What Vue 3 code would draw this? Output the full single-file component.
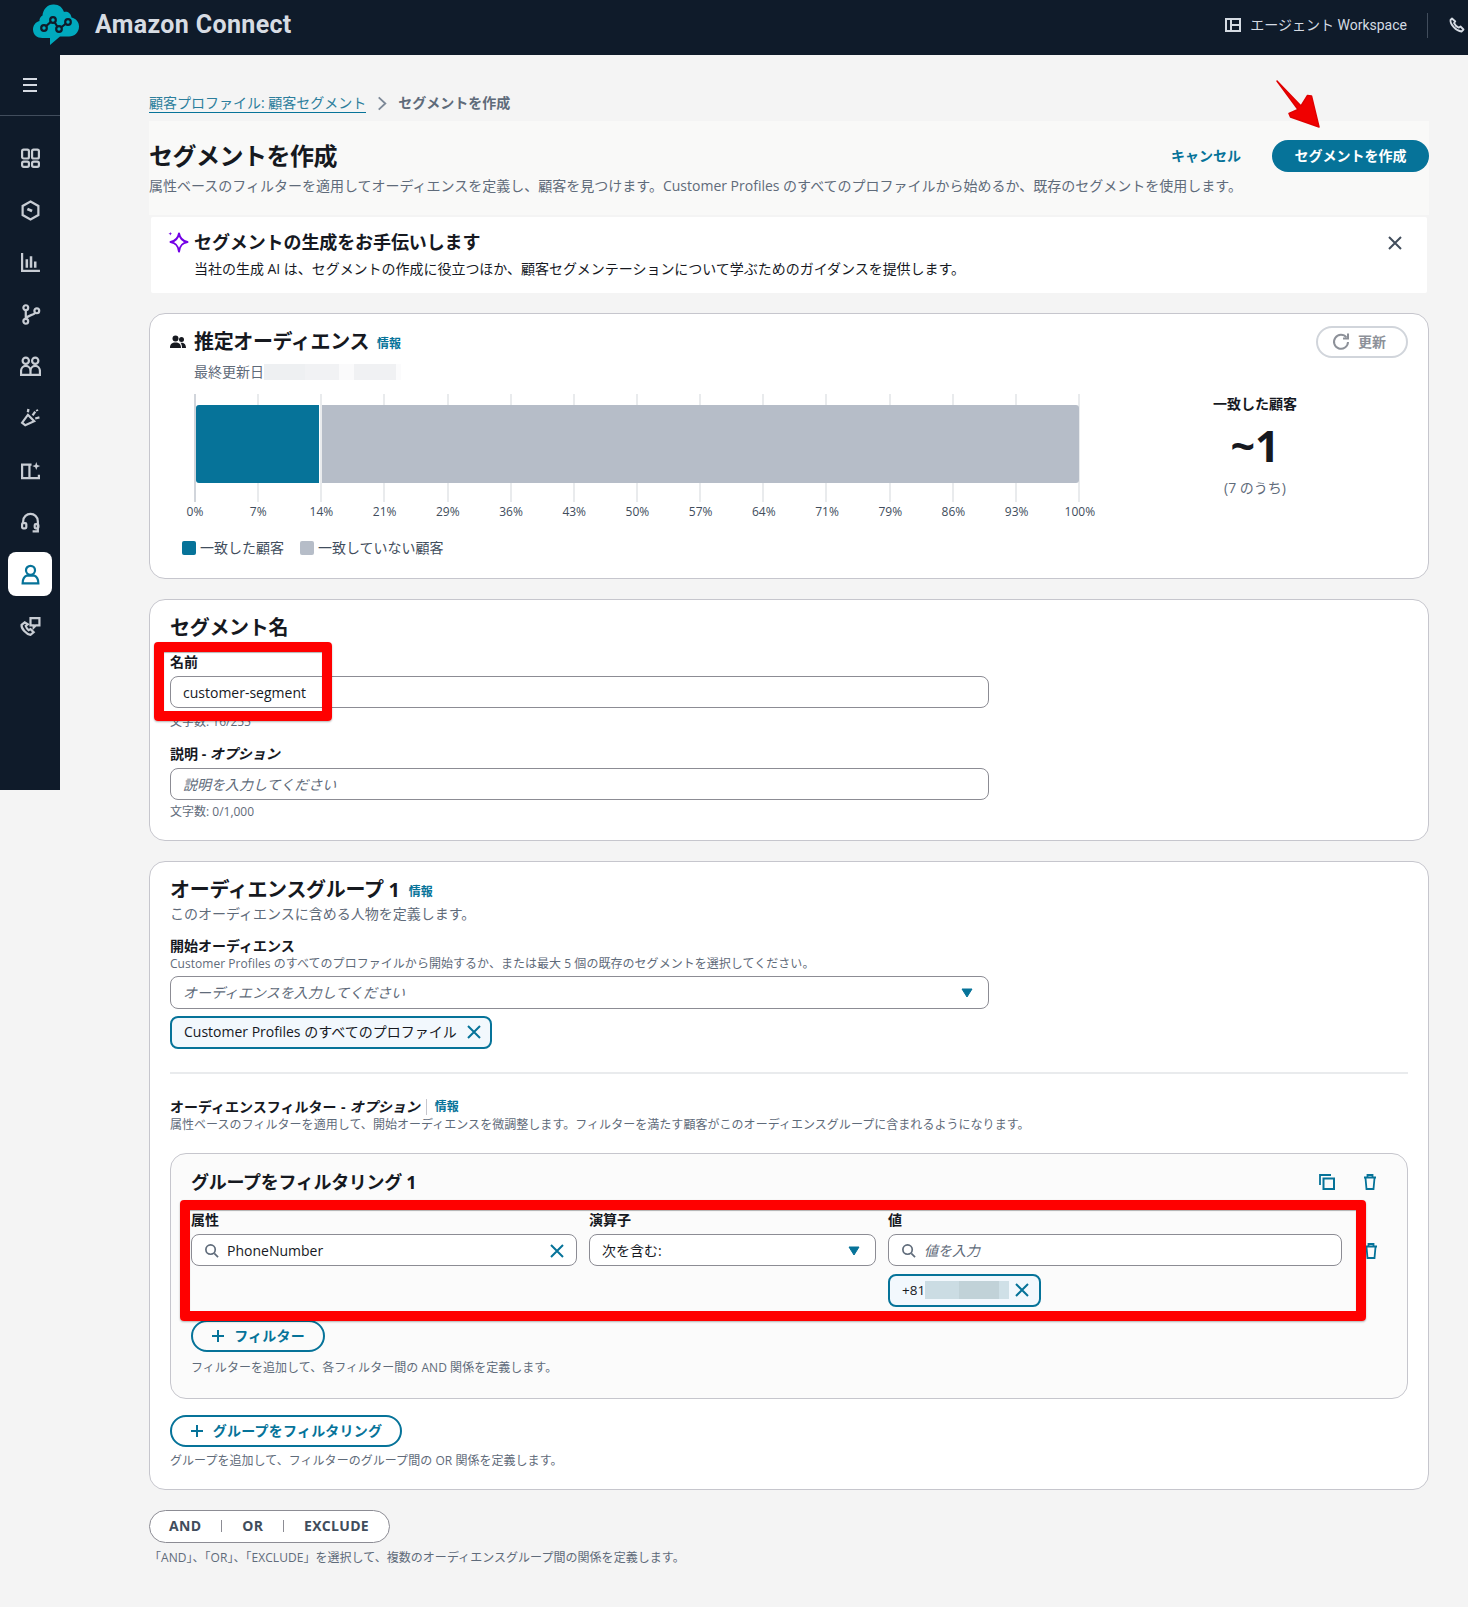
<script setup>
const ticks = ['0%','7%','14%','21%','29%','36%','43%','50%','57%','64%','71%','79%','86%','93%','100%']
</script>

<template>
  <div class="app">
    <header class="topbar">
      <div class="brand">
        <svg class="logo" viewBox="0 0 46 42" width="46" height="42">
          <path fill="#00a9bd" d="M17 41v-7H9.500C4 34 0 30.500 0 25.500 0 21.500 2.500 18 6.500 17 6 15.500 7.500 12.500 9.500 11.500 10 5 15 0 21 .5c5 0 8.500 3 10 7.500 3-1 7 1 7.500 5.500 4.500 1 7.500 4.500 7.500 9 0 6-4.500 10-10 10H27z"/>
          <path fill="none" stroke="#0f1b2a" stroke-width="2.200" d="M11 24l9-8 6 9 9-7"/>
          <circle cx="11" cy="24" r="2.800" fill="#00a9bd" stroke="#0f1b2a" stroke-width="2.200"/>
          <circle cx="20" cy="16" r="2.800" fill="#00a9bd" stroke="#0f1b2a" stroke-width="2.200"/>
          <circle cx="26" cy="25" r="2.800" fill="#00a9bd" stroke="#0f1b2a" stroke-width="2.200"/>
          <circle cx="35" cy="18" r="2.800" fill="#00a9bd" stroke="#0f1b2a" stroke-width="2.200"/>
        </svg>
        <span class="brand-name">Amazon Connect</span>
      </div>
      <div class="top-right">
        <svg viewBox="0 0 16 16" width="16" height="16" class="ico-top"><path d="M1 2h14v12H1zM6 2v12M6 8h9" fill="none" stroke="currentColor" stroke-width="2"/></svg>
        <span class="workspace">エージェント Workspace</span>
        <span class="top-sep"></span>
        <svg viewBox="0 0 16 16" width="16" height="16" class="ico-top phone"><path d="M3 1.500L1.500 3c-.5 4 5.500 11 11 11.500l2-2-3-3-1.800 1.200C7.500 10 6 8 5 6l1.300-1.500z" fill="none" stroke="currentColor" stroke-width="1.800" stroke-linejoin="round"/></svg>
      </div>
    </header>

    <div class="shell">
      <aside class="sidebar">
        <div class="burger"><span></span><span></span><span></span></div>
        <nav class="nav">
          <div class="nav-item"><svg viewBox="0 0 20 20"><rect x="2" y="1.500" width="6.500" height="8.500" rx="1.500"/><rect x="11.500" y="1.500" width="6.500" height="8.500" rx="1.500"/><rect x="2" y="13" width="6.500" height="5" rx="1.500"/><rect x="11.500" y="13" width="6.500" height="5" rx="1.500"/></svg></div>
          <div class="nav-item"><svg viewBox="0 0 20 20"><path d="M10 1.500l7.500 4.200v8.600L10 18.500l-7.500-4.200V5.700z"/><path d="M7 8.500l4.500 2" stroke-width="2.600"/></svg></div>
          <div class="nav-item"><svg viewBox="0 0 20 20"><path d="M2 1v17h17"/><path d="M6.500 7v8M10.500 4v11M14.500 9v6" stroke-width="2.400"/></svg></div>
          <div class="nav-item"><svg viewBox="0 0 20 20"><circle cx="5.500" cy="3.500" r="2.300"/><circle cx="5.500" cy="16.500" r="2.300"/><circle cx="16" cy="6.500" r="2.300"/><path d="M5.500 6v8M14.500 8.500C12 11 7.500 10.500 5.500 14"/></svg></div>
          <div class="nav-item"><svg viewBox="0 0 20 20"><circle cx="5.500" cy="4.500" r="3"/><circle cx="14.500" cy="4.500" r="3"/><path d="M1 18v-3.500C1 11.500 3 9.500 5.500 9.500S10 11.500 10 14.500V18zM10 18v-3.500c0-3 2-5 4.500-5s4.500 2 4.500 5V18z"/></svg></div>
          <div class="nav-item"><svg viewBox="0 0 20 20"><path d="M7.500 6.500l6 6L5 16.500l-3-2.500z"/><path d="M8 1l-.5 3M12 7l2.500-3.500M14.500 10l4-1M16 1.500l.5 1.500" stroke-width="2.200"/></svg></div>
          <div class="nav-item"><svg viewBox="0 0 20 20"><path d="M11 4.500H2v12.800h16V14M9 4.500v12.800"/><path d="M15.500 2l1 2.800 2.800 1-2.800 1-1 2.800-1-2.800-2.800-1 2.800-1z" fill="currentColor" stroke="none"/></svg></div>
          <div class="nav-item"><svg viewBox="0 0 20 20"><path d="M3 11V9c0-9.500 14-9.500 14 0v9.500h-5"/><rect x="2" y="10.500" width="4" height="5" rx="1"/><rect x="14" y="11.500" width="3.500" height="4" rx="1"/></svg></div>
          <div class="nav-item active"><svg viewBox="0 0 20 20"><circle cx="10" cy="6" r="4.300"/><path d="M2.500 18.500c0-3.500 1.500-6.500 4-7.500h7c2.500 1 4 4 4 7.500z"/></svg></div>
          <div class="nav-item"><svg viewBox="0 0 20 20"><path d="M4.500 6L1.500 8.500c-.5 3.500 4.500 9 8.500 9.500l3-2.500-3-3-1.800 1C7 12.500 6 11 5.500 9.500L7.500 8z"/><path d="M10 2h8.500v7H15l-2 2V9h-3z"/></svg></div>
        </nav>
      </aside>

      <main class="main">
        <div class="crumbs">
          <a class="crumb-link">顧客プロファイル: 顧客セグメント</a>
          <svg class="crumb-sep" viewBox="0 0 10 16" width="10" height="15"><path d="M1.500 1.500l7 6.500-7 6.500" fill="none" stroke="#7d8998" stroke-width="2"/></svg>
          <span class="crumb-cur">セグメントを作成</span>
        </div>

        <section class="page-head">
          <div class="head-row">
            <h1>セグメントを作成</h1>
            <div class="head-actions">
              <span class="cancel">キャンセル</span>
              <span class="primary">セグメントを作成</span>
            </div>
          </div>
          <p class="head-desc">属性ベースのフィルターを適用してオーディエンスを定義し、顧客を見つけます。Customer Profiles のすべてのプロファイルから始めるか、既存のセグメントを使用します。</p>
        </section>

        <section class="alert">
          <svg class="spark" viewBox="0 0 22 22" width="22" height="22"><path d="M12 2.500c.9 5 3 7.500 8.500 8.500-5.500 1-7.600 3.500-8.500 9.500-.9-6-3-8.500-8.500-9.500 5.500-1 7.600-3.500 8.500-8.500z" fill="none" stroke="#7300e5" stroke-width="2" stroke-linejoin="round"/><path d="M3.300 1l.5 1.300 1.300.5-1.300.5-.5 1.300-.5-1.300-1.300-.5 1.300-.5z" fill="#7300e5"/></svg>
          <div class="alert-body">
            <div class="alert-title">セグメントの生成をお手伝いします</div>
            <div class="alert-desc">当社の生成 AI は、セグメントの作成に役立つほか、顧客セグメンテーションについて学ぶためのガイダンスを提供します。</div>
          </div>
          <svg class="x-dark" viewBox="0 0 14 14" width="14" height="14"><path d="M1 1l12 12M13 1L1 13" stroke="#414d5c" stroke-width="2"/></svg>
        </section>

        <section class="card card-a">
          <div class="a-head">
            <div class="a-title">
              <svg viewBox="0 0 16 14" width="16" height="14"><circle cx="5.500" cy="3.500" r="3" fill="#16191f"/><circle cx="11.500" cy="4.500" r="2.500" fill="#16191f"/><path d="M0 13c0-4 2-5.500 5.500-5.500S11 9 11 13zM12 13c0-2-.5-4-1.500-5.200 3-.5 5.500 1 5.500 5.200z" fill="#16191f"/></svg>
              <h2>推定オーディエンス</h2>
              <span class="info">情報</span>
            </div>
            <span class="refresh">
              <svg viewBox="0 0 18 18" width="18" height="18"><path d="M14.500 4.500A7 7 0 1 0 16 9" fill="none" stroke="#8d9199" stroke-width="2"/><path d="M11 5.500h5v-5" fill="none" stroke="#8d9199" stroke-width="2"/></svg>
              更新
            </span>
          </div>
          <div class="updated">
            <span>最終更新日</span>
            <span class="blur-date"></span>
          </div>
          <div class="a-row">
            <div class="chart">
              <div class="plot">
                <div class="tick-row"><i v-for="t in ticks" :key="t"></i></div>
                <div class="bars"><span class="bar-on"></span><span class="bar-off"></span></div>
              </div>
              <div class="labels"><span v-for="t in ticks" :key="t"><b>{{ t }}</b></span></div>
              <div class="legend">
                <span class="sw on"></span><span>一致した顧客</span>
                <span class="sw off"></span><span>一致していない顧客</span>
              </div>
            </div>
            <div class="summary">
              <div class="s-label">一致した顧客</div>
              <div class="s-num">~1</div>
              <div class="s-of">(7 のうち)</div>
            </div>
          </div>
        </section>

        <section class="card card-b">
          <h2 class="sec-title">セグメント名</h2>
          <label class="lab first">名前</label>
          <div class="field"><span class="val">customer-segment</span></div>
          <div class="count">文字数: 16/255</div>
          <label class="lab second">説明 - <em>オプション</em></label>
          <div class="field"><span class="ph">説明を入力してください</span></div>
          <div class="count small-gap">文字数: 0/1,000</div>
        </section>

        <section class="card card-c">
          <div class="c-title"><h2 class="sec-title">オーディエンスグループ 1</h2><span class="info">情報</span></div>
          <p class="c-desc">このオーディエンスに含める人物を定義します。</p>
          <label class="lab start">開始オーディエンス</label>
          <div class="hint">Customer Profiles のすべてのプロファイルから開始するか、または最大 5 個の既存のセグメントを選択してください。</div>
          <div class="field select top-select"><span class="ph">オーディエンスを入力してください</span><svg viewBox="0 0 12 10" width="12" height="10"><path d="M1 1h10L6 9z" fill="#067399" stroke="#067399"/></svg></div>
          <div class="token wide">
            <span>Customer Profiles のすべてのプロファイル</span>
            <svg viewBox="0 0 14 14" width="14" height="14"><path d="M1 1l12 12M13 1L1 13" stroke="#067399" stroke-width="2"/></svg>
          </div>
          <hr class="divider" />
          <div class="f-label"><span class="lab">オーディエンスフィルター - <em>オプション</em></span><span class="f-sep"></span><span class="info">情報</span></div>
          <div class="hint f-hint">属性ベースのフィルターを適用して、開始オーディエンスを微調整します。フィルターを満たす顧客がこのオーディエンスグループに含まれるようになります。</div>

          <div class="fbox">
            <div class="fbox-head">
              <h3>グループをフィルタリング 1</h3>
              <div class="fbox-tools">
                <svg viewBox="0 0 16 16" width="16" height="16"><path d="M1 11V1h11" fill="none" stroke="#067399" stroke-width="1.800"/><rect x="4.500" y="4.500" width="10.500" height="10.500" fill="none" stroke="#067399" stroke-width="2"/></svg>
                <svg viewBox="0 0 14 16" width="14" height="16"><path d="M1 3.500h12M4.500 3V1h5v2M2.500 4l1 11h7l1-11" fill="none" stroke="#067399" stroke-width="1.800"/></svg>
              </div>
            </div>
            <div class="fgrid">
              <div>
                <label class="lab">属性</label>
                <div class="field tight">
                  <svg viewBox="0 0 16 16" width="15" height="15"><circle cx="7" cy="7" r="5" fill="none" stroke="#5f6b7a" stroke-width="1.800"/><path d="M11 11l4 4" stroke="#5f6b7a" stroke-width="1.800"/></svg>
                  <span class="val grow">PhoneNumber</span>
                  <svg viewBox="0 0 14 14" width="14" height="14"><path d="M1 1l12 12M13 1L1 13" stroke="#067399" stroke-width="2"/></svg>
                </div>
              </div>
              <div>
                <label class="lab">演算子</label>
                <div class="field select"><span class="val">次を含む:</span><svg viewBox="0 0 12 10" width="12" height="10"><path d="M1 1h10L6 9z" fill="#067399" stroke="#067399"/></svg></div>
              </div>
              <div>
                <label class="lab">値</label>
                <div class="field tight">
                  <svg viewBox="0 0 16 16" width="15" height="15"><circle cx="7" cy="7" r="5" fill="none" stroke="#5f6b7a" stroke-width="1.800"/><path d="M11 11l4 4" stroke="#5f6b7a" stroke-width="1.800"/></svg>
                  <span class="ph grow">値を入力</span>
                </div>
                <div class="token phone-token">
                  <span class="plus81">+81</span><span class="blur-phone"></span>
                  <svg viewBox="0 0 14 14" width="14" height="14"><path d="M1 1l12 12M13 1L1 13" stroke="#067399" stroke-width="2"/></svg>
                </div>
              </div>
              <svg class="row-trash" viewBox="0 0 14 16" width="14" height="16"><path d="M1 3.500h12M4.500 3V1h5v2M2.500 4l1 11h7l1-11" fill="none" stroke="#067399" stroke-width="1.800"/></svg>
            </div>
            <span class="outline add-filter"><svg viewBox="0 0 14 14" width="14" height="14"><path d="M7 1v12M1 7h12" stroke="#067399" stroke-width="2"/></svg>フィルター</span>
            <div class="hint add-hint">フィルターを追加して、各フィルター間の AND 関係を定義します。</div>
          </div>

          <span class="outline add-group"><svg viewBox="0 0 14 14" width="14" height="14"><path d="M7 1v12M1 7h12" stroke="#067399" stroke-width="2"/></svg>グループをフィルタリング</span>
          <div class="hint group-hint">グループを追加して、フィルターのグループ間の OR 関係を定義します。</div>
        </section>

        <div class="seg">
          <span>AND</span><i></i><span>OR</span><i></i><span>EXCLUDE</span>
        </div>
        <div class="hint seg-hint">「AND」、「OR」、「EXCLUDE」を選択して、複数のオーディエンスグループ間の関係を定義します。</div>
      </main>
    </div>

    <div class="mark mark-name"></div>
    <div class="mark mark-filter"></div>
    <svg class="arrow" viewBox="0 0 46 50" width="46" height="50">
      <path d="M1 1L25 26 31.500 15.500l4 .5L43 47 14.500 37 13 33.500l9-4z" fill="#f00000" stroke="#e00000" stroke-width="1.500" stroke-linejoin="round"/>
    </svg>
  </div>
</template>

<style>
html, body { margin: 0; background: #f4f4f4; }
</style>

<style scoped>
.app {
  position: relative;
  width: 1468px;
  height: 1607px;
  overflow: hidden;
  background: #f4f4f4;
  color: #16191f;
  font-family: "Open Sans", "Noto Sans CJK JP", sans-serif;
  font-size: 14px;
  line-height: 20px;
}
h1, h2, h3, p { margin: 0; }

.topbar {
  height: 55px;
  box-sizing: border-box;
  padding-bottom: 5px;
  background: #0f1b2a;
  display: flex;
  align-items: center;
  justify-content: space-between;
  color: #d5dbe3;
}
.brand { display: flex; align-items: center; padding-left: 33px; }
.logo { margin-top: 0; }
.brand-name {
  margin-left: 16px;
  font-family: Roboto, "Liberation Sans", sans-serif;
  font-weight: 700;
  font-size: 25px;
  letter-spacing: .35px;
  color: #d7dce3;
}
.top-right { display: flex; align-items: center; margin-right: 3px; }
.ico-top { display: block; }
.workspace {
  margin-left: 9px;
  font-family: Roboto, "Noto Sans CJK JP", sans-serif;
  font-size: 14px;
}
.top-sep { width: 1px; height: 25px; background: #414d5c; margin: 0 21px 0 20px; }

.shell { display: flex; align-items: flex-start; }
.sidebar { width: 60px; height: 735px; background: #0f1b2a; flex: none; }
.burger {
  height: 61px;
  box-sizing: border-box;
  border-bottom: 1px solid #414d5c;
  display: flex;
  flex-direction: column;
  align-items: center;
  justify-content: flex-start;
  gap: 4px;
  padding-top: 23px;
}
.burger span { width: 14px; height: 2px; background: #d5dbe3; }
.nav { display: flex; flex-direction: column; align-items: center; padding-top: 20px; }
.nav-item {
  width: 44px; height: 44px;
  margin-bottom: 8px;
  display: flex; align-items: center; justify-content: center;
  color: #c8cdd4;
  border-radius: 8px;
}
.nav-item svg { width: 21px; height: 21px; fill: none; stroke: currentColor; stroke-width: 2.100; }
.nav-item.active { background: #fff; color: #067399; }

.main { flex: 1; padding: 38px 39px 0 89px; min-width: 0; }

.crumbs { height: 20px; display: flex; align-items: center; }
.crumb-link { border-bottom: 1px solid #067399; line-height: 18px; color: #2c7e9c; }
.crumb-sep { margin: 0 11px 0 11px; }
.crumb-cur { color: #5f6b7a; font-weight: 700; }

.page-head {
  margin-top: 8px;
  height: 94px;
  box-sizing: border-box;
  padding-top: 19px;
  background: #f9f9f8;
}
.head-row { display: flex; align-items: center; justify-content: space-between; height: 32px; }
h1 { font-size: 24px; line-height: 30px; font-weight: 700; letter-spacing: -.5px; }
.head-actions { display: flex; align-items: center; }
.cancel { color: #067399; font-weight: 700; margin-right: 31px; }
.primary {
  width: 157px; height: 32px;
  border-radius: 16px;
  background: #067399;
  color: #fff;
  font-weight: 700;
  display: flex; align-items: center; justify-content: center;
}
.head-desc { margin-top: 4px; color: #5f6b7a; }

.alert {
  margin: 2px 2px 0;
  height: 76px;
  box-sizing: border-box;
  padding: 13px 25px 0 16px;
  background: #fff;
  border-radius: 2px;
  display: flex;
  align-items: flex-start;
}
.spark { flex: none; margin: 1px 5px 0 0; }
.alert-body { flex: 1; }
.alert-title { font-size: 18px; line-height: 24px; font-weight: 700; letter-spacing: -.1px; }
.alert-desc { margin-top: 5px; letter-spacing: -.03px; }
.x-dark { margin-top: 6px; }

.card {
  background: #fff;
  border: 1px solid #c6c6cd;
  border-radius: 16px;
  box-sizing: border-box;
  padding: 0 20px;
}
.card-a { margin-top: 20px; height: 266px; padding-top: 12px; }
.a-head { display: flex; justify-content: space-between; align-items: center; height: 32px; }
.a-title { display: flex; align-items: center; }
.a-title h2 { font-size: 20px; line-height: 28px; font-weight: 700; margin-left: 8px; letter-spacing: -.35px; }
.info { color: #067399; font-size: 12px; font-weight: 700; margin-left: 8px; }
.a-title .info { margin-top: 4px; }
.refresh {
  width: 92px; height: 32px;
  box-sizing: border-box;
  border: 2px solid #d1d5db;
  border-radius: 16px;
  padding-right: 6px;
  display: flex; align-items: center; justify-content: center;
  gap: 8px;
  color: #8d9199;
  font-weight: 700;
}
.updated { display: flex; align-items: center; margin: 4px 0 0 24px; color: #5f6b7a; height: 20px; }
.blur-date {
  width: 137px; height: 16px;
  background: linear-gradient(90deg, #eef0f2 0 30%, #f1f2f4 30% 55%, #fafafb 55% 66%, #f0f1f3 66% 96%, #fbfbfc 96%);
}
.a-row { display: flex; margin-top: 12px; }
.chart { width: 886px; margin-left: 24px; flex: none; }
.plot { position: relative; height: 108px; }
.tick-row { display: flex; justify-content: space-between; height: 100%; }
.tick-row i { width: 2px; background: #e9ebed; }
.tick-row i:first-child { background: #d1d5db; }
.bars { position: absolute; top: 11px; left: 2px; width: 883px; height: 78px; display: flex; gap: 3px; }
.bar-on { width: 123px; background: #067399; border-radius: 3px 0 0 3px; }
.bar-off { flex: 1; background: #b6bdc8; border-radius: 0 3px 3px 0; }
.labels { display: flex; justify-content: space-between; height: 20px; margin-top: 0; padding-left: 1px; }
.labels span { width: 0; display: flex; justify-content: center; white-space: nowrap; }
.labels b { font-weight: 400; font-size: 12px; color: #414d5c; }
.legend { display: flex; align-items: center; margin: 16px 0 0 -12px; height: 20px; color: #414d5c; }
.sw { width: 14px; height: 14px; border-radius: 2px; margin-right: 4px; }
.sw.on { background: #067399; }
.sw.off { background: #b6bdc8; margin-left: 16px; }
.summary { width: 200px; margin-left: 75px; text-align: center; }
.s-label { font-weight: 700; }
.s-num { font-size: 43px; line-height: 50px; font-weight: 700; margin-top: 7px; }
.s-of { margin-top: 7px; color: #5f6b7a; }

.card-b { margin-top: 20px; height: 242px; padding-top: 15px; }
.sec-title { font-size: 20px; line-height: 26px; font-weight: 700; letter-spacing: -.3px; }
.lab { display: block; font-weight: 700; line-height: 20px; }
.lab em { font-style: italic; }
.first { margin-top: 11px; }
.second { margin-top: 12px; }
.field {
  width: 819px;
  height: 32px;
  margin-top: 4px;
  box-sizing: border-box;
  border: 1px solid #8c8c94;
  border-radius: 8px;
  background: #fff;
  display: flex;
  align-items: center;
  padding: 1px 12px 0;
}
.val { color: #16191f; }
.ph { color: #5f6b7a; font-style: italic; }
.grow { flex: 1; margin-left: 8px; }
.count { margin-top: 4px; font-size: 12px; color: #5f6b7a; }
.small-gap { margin-top: 2px; }

.card-c { margin-top: 20px; height: 629px; padding-top: 14px; }
.c-title { display: flex; align-items: center; height: 28px; }
.c-title .info { margin: 4px 0 0 9px; }
.c-desc { color: #5f6b7a; }
.start { margin-top: 12px; }
.hint { font-size: 12px; line-height: 16px; color: #5f6b7a; letter-spacing: .04px; }
.select { justify-content: space-between; padding-right: 15px; }
.top-select { height: 33px; padding-top: 0; }
.token {
  display: flex;
  align-items: center;
  box-sizing: border-box;
  height: 33px;
  border: 2px solid #067399;
  border-radius: 8px;
  background: #f2f8fd;
}
.wide { width: 322px; margin-top: 7px; padding: 0 9px 1px 12px; justify-content: space-between; }
.divider { border: 0; height: 2px; background: #e9ebed; margin: 23px 0 0; }
.f-label { display: flex; align-items: center; margin-top: 23px; height: 20px; }
.f-label .lab { word-spacing: .8px; }
.f-sep { width: 1px; height: 16px; background: #c6c6cd; margin: 0 0 0 6px; }
.f-label .info { margin-left: 8px; }

.fbox {
  margin-top: 20px;
  height: 246px;
  box-sizing: border-box;
  background: #fbfbfb;
  border: 1px solid #c6c6cd;
  border-radius: 16px;
  padding: 16px 20px 0;
}
.fbox-head { display: flex; justify-content: space-between; align-items: center; height: 24px; }
h3 { font-size: 18px; line-height: 24px; font-weight: 700; letter-spacing: -.3px; }
.fbox-tools { display: flex; gap: 28px; margin-right: 10px; align-items: center; }
.fgrid {
  position: relative;
  display: grid;
  grid-template-columns: 386px 287px 454px;
  column-gap: 12px;
  margin-top: 16px;
  height: 110px;
}
.fgrid .field { width: 100%; }
.row-trash { position: absolute; left: 1173px; top: 33px; }
.phone-token { width: 153px; margin-top: 8px; padding: 0 4px 1px 12px; background: #f2f8fd; }
.plus81 { font-family: "Open Sans", sans-serif; font-size: 13.500px; }
.blur-phone { width: 84px; height: 18px; margin-right: 6px; background: linear-gradient(90deg, #cbdce3 0 40%, #c1d2d8 40% 88%, #cfe0e7 88%); }

.outline {
  display: inline-flex;
  align-items: center;
  justify-content: center;
  gap: 9px;
  box-sizing: border-box;
  height: 32px;
  border: 2px solid #067399;
  border-radius: 16px;
  background: #fff;
  color: #067399;
  font-weight: 700;
  letter-spacing: .2px;
}
.add-filter { width: 134px; background: #fbfbfb; }
.add-hint { margin-top: 8px; }
.add-group { width: 232px; margin-top: 16px; }
.group-hint { margin-top: 6px; }

.seg {
  margin-top: 20px;
  width: 241px;
  height: 33px;
  box-sizing: border-box;
  border: 1px solid #8c8c94;
  border-radius: 17px;
  background: #fff;
  display: flex;
  align-items: center;
  justify-content: space-between;
  padding: 0 20px 1px 19px;
  color: #414d5c;
  font-weight: 700;
  letter-spacing: .3px;
}
.seg i { width: 1px; height: 12px; background: #8c8c94; }
.seg-hint { margin-top: 7px; }

.mark {
  position: absolute;
  box-sizing: border-box;
  border: 10px solid #f00;
  border-radius: 4px;
  box-shadow: 0 1px 2px rgba(0, 0, 0, .3), inset 0 1px 1px rgba(0, 0, 0, .3);
  pointer-events: none;
}
.mark-name { left: 154px; top: 642px; width: 178px; height: 79px; }
.mark-filter { left: 180px; top: 1200px; width: 1186px; height: 121px; }
.arrow { position: absolute; left: 1276px; top: 80px; }
</style>
